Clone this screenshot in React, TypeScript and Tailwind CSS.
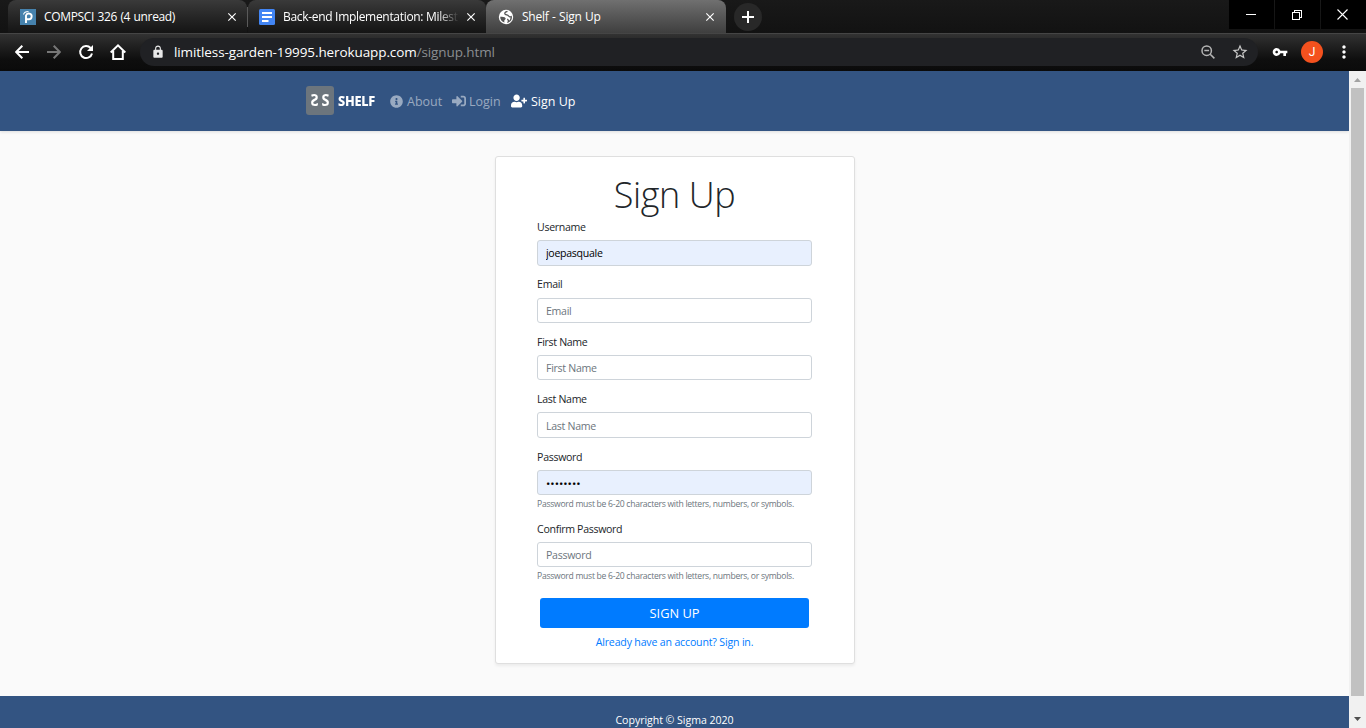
import React from "react";
import { FaInfoCircle, FaSignInAlt, FaUserPlus } from "react-icons/fa";
import { MdClose, MdLock, MdMoreVert, MdStarBorder, MdVpnKey } from "react-icons/md";

function Tab({ icon, title, active, className }: { icon: React.ReactNode; title: React.ReactNode; active?: boolean; className: string }) {
  return (
    <div
      className={`flex h-[33px] items-center rounded-t-lg ${
        active ? "bg-linear-to-b from-[#707070] to-[#3f3f3f] pr-[9px]" : "bg-linear-to-b from-[#3a3a3a] to-[#141414] pr-2"
      } ${className}`}
    >
      {icon}
      {title}
      <MdClose className="ml-auto size-[14px] shrink-0 text-white" />
    </div>
  );
}

function BrowserChrome() {
  return (
    <header className="h-[71px] shrink-0 bg-[#0b0b0b] text-white">
      <div className="flex h-[33px] bg-linear-to-b from-[#191919] to-[#121212] pl-2">
        <Tab
          className="w-[239px] pl-3"
          icon={
            <svg viewBox="0 0 16 16" className="size-4 shrink-0">
              <rect width="16" height="16" fill="#4682ad" />
              <path d="M6 14V6.500a2.900 2.900 0 1 1 2.500 3.800H6" fill="none" stroke="#fff" strokeWidth="1.900" />
              <path d="M3.500 5.500C4 3.300 5.800 2.500 8.500 2.500" fill="none" stroke="#fff" strokeWidth="1.100" />
            </svg>
          }
          title={<span className="ml-2 text-[12px] tracking-[-0.35px] whitespace-nowrap [word-spacing:0.7px]">COMPSCI 326 (4 unread)</span>}
        />
        <div className="mt-[7px] h-5 w-px bg-[#5a5a5a]" />
        <Tab
          className="w-[238px] pl-[11px]"
          icon={
            <svg viewBox="0 0 16 16" className="size-4 shrink-0">
              <rect width="16" height="16" rx="1.5" fill="#4285f4" />
              <path d="M3 4h10M3 8h10M3 12h6.5" stroke="#fff" strokeWidth="2" />
            </svg>
          }
          title={
            <span className="ml-2 w-[176px] mask-r-from-88% text-[12px] tracking-[-0.31px] whitespace-nowrap">
              Back-end Implementation: Milest
            </span>
          }
        />
        <Tab
          active
          className="w-[240px] pl-[12px]"
          icon={
            <svg viewBox="0 0 16 16" className="size-4 shrink-0">
              <circle cx="8" cy="8" r="7.200" fill="#fff" />
              <path d="M9.500 2.400C7 3 6.300 4.200 7.200 5.200c1 .9 2.600.6 3.200 1.600.5.900 1.800 1.200 2.800.8.300 2-1 4.400-3 5.300.6-1.600 0-2.300-1-2.900" fill="none" stroke="#555" strokeWidth="1.300" />
              <path d="M2.200 7.800c2 .2 4.500-.2 5.400 1.400.5 1.200-1.200 1.500-1.400 2.700l.3 1.700C4 13 2 10.800 2.200 7.800z" fill="#555" />
            </svg>
          }
          title={<span className="ml-[8px] text-[12px] tracking-[-0.22px] whitespace-nowrap [word-spacing:0.5px]">Shelf - Sign Up</span>}
        />
        <div className="mt-[3px] ml-2 flex size-7 items-center justify-center rounded-full bg-[#282828]">
          <svg viewBox="0 0 12 12" className="size-3">
            <path d="M6 0v12M0 6h12" stroke="#fff" strokeWidth="2" />
          </svg>
        </div>
        <div className="ml-auto flex h-[29px] gap-px">
          <div className="flex w-[45px] items-center justify-center bg-black pr-[2px]">
            <div className="h-px w-[10px] bg-white" />
          </div>
          <div className="flex w-[45px] items-center justify-center bg-black pr-px">
            <svg viewBox="0 0 10 10" className="size-[10px]" fill="none" stroke="#fff" shapeRendering="crispEdges">
              <path d="M.5 2.5h7v7h-7zM2.5 2.5v-2h7v7h-2" />
            </svg>
          </div>
          <div className="flex w-[45px] items-center justify-center bg-black pr-[2px]">
            <svg viewBox="0 0 11 11" className="size-[11px]" stroke="#fff" strokeWidth="1.1">
              <path d="M.5.5l10 10M10.5.5l-10 10" />
            </svg>
          </div>
        </div>
      </div>
      <div className="h-[38px] border-t border-[#454545] bg-linear-to-b from-[#323232] from-0% via-[#0e0e0e] via-70% to-[#0b0b0b] pt-1">
        <div className="flex h-7 items-center">
          <svg viewBox="0 0 14 14" className="ml-[15px] size-[14px]" fill="none" stroke="#fff" strokeWidth="2">
            <path d="M14 7H1.5M7.3 .8L1.2 7l6.1 6.2" />
          </svg>
          <svg viewBox="0 0 14 14" className="ml-[18px] size-[14px]" fill="none" stroke="#777" strokeWidth="2">
            <path d="M0 7h12.5M6.7 .8L12.8 7l-6.1 6.2" />
          </svg>
          <svg viewBox="0 0 16 16" className="ml-[17px] size-4" fill="none" stroke="#fff" strokeWidth="2">
            <path d="M12.6 4A6 6 0 1 0 14 9.5" />
            <path d="M15 1v6H9z" fill="#fff" stroke="none" />
          </svg>
          <svg viewBox="0 0 16 16" className="ml-4 size-4" fill="none" stroke="#fff" strokeWidth="2">
            <path d="M.7 8.5L8 1.4l7.3 7.1M3.2 7v8h9.6V7" />
          </svg>
          <div className="ml-[14px] flex h-7 w-[1118px] items-center rounded-full bg-[#202124] pr-[9px] pl-[11px]">
            <MdLock className="size-[14px] text-[#e8e8e8]" />
            <span className="ml-[9px] text-[13.5px] tracking-[-0.1px] whitespace-nowrap text-white">
              limitless-garden-19995.herokuapp.com<span className="text-[#8b8e91]">/signup.html</span>
            </span>
            <svg viewBox="0 0 14 14" className="mr-[2px] ml-auto size-[14px]" fill="none" stroke="#b5b5b5" strokeWidth="1.500">
              <circle cx="5.700" cy="5.700" r="4.700" />
              <path d="M9.200 9.200l4.200 4.200M3.300 5.500h4.800" />
            </svg>
            <MdStarBorder className="ml-[14px] size-[18px] text-[#c8c8c8]" />
          </div>
          <MdVpnKey className="ml-[14px] size-4 text-white" />
          <div className="ml-[13px] flex size-[22px] items-center justify-center rounded-full bg-[#f4511e] font-[Roboto,sans-serif] text-[12px]">J</div>
          <MdMoreVert className="ml-[11px] size-5" />
        </div>
      </div>
    </header>
  );
}

function Field({ label, value, placeholder, hint, password }: { label: string; value?: string; placeholder?: string; hint?: string; password?: boolean }) {
  return (
    <div className="mb-[9.9px]">
      <label className="block h-[18px] pl-[0.6px] text-[10.6px] leading-[18px] tracking-[-0.33px] text-[#212529]">{label}</label>
      <input
        type={password ? "password" : "text"}
        defaultValue={value}
        placeholder={placeholder}
        className={`mt-[4.2px] block h-[25.3px] w-full rounded-[3px] border border-[#ced4da] pr-2 pl-[8.5px] text-black placeholder:text-[#6c757d] ${
          value ? "bg-[#e8f0fe]" : "bg-white"
        } ${password && value ? "pt-0.5 text-[11.5px] tracking-normal" : "pt-px text-[10.6px] tracking-[-0.3px]"}`}
      />
      {hint && <p className="h-[14.6px] pt-[3px] pl-[0.6px] text-[8.6px] leading-3 tracking-[-0.29px] whitespace-nowrap text-[#6c757d]">{hint}</p>}
    </div>
  );
}

const passwordHint = "Password must be 6-20 characters with letters, numbers, or symbols.";

function Scrollbar() {
  return (
    <div className="flex w-[17px] shrink-0 flex-col items-center bg-[#f1f1f1]">
      <svg viewBox="0 0 17 17" className="h-[17px] w-[17px]">
        <path d="M5 11h7L8.5 7z" fill="#a3a3a3" />
      </svg>
      <div className="h-[608px] w-[13px] bg-[#c1c1c1]" />
      <svg viewBox="0 0 17 17" className="mt-auto h-[17px] w-[17px]">
        <path d="M5 6h7l-3.500 4z" fill="#505050" />
      </svg>
    </div>
  );
}

export default function App() {
  return (
    <div className="flex h-[728px] w-[1366px] flex-col overflow-hidden font-['Open_Sans','Noto_Sans',sans-serif]">
      <BrowserChrome />
      <div className="flex min-h-0 flex-1">
        <div className="flex flex-1 flex-col bg-[#fafafa]">
          <nav className="flex h-[60px] shrink-0 items-center bg-[#335482] pl-[306px] text-[12.5px] text-white/50 shadow-[0_1px_3px_rgba(0,0,0,0.12)]">
            <div className="mb-px flex h-[29px] w-7 items-center justify-center gap-[2px] rounded-[3px] bg-[#6c757d] pb-px font-['Noto_Sans',sans-serif] text-[16px] font-bold text-white">
              <span className="-scale-x-90">S</span>
              <span className="scale-x-90">S</span>
            </div>
            <div className="ml-1 w-[38px] pb-px">
              <span className="inline-block origin-left scale-x-[0.88] font-['Noto_Sans',sans-serif] text-[14.5px] font-extrabold tracking-[-0.3px] text-white">SHELF</span>
            </div>
            <a className="ml-[14px] flex w-[62px] items-center gap-1 whitespace-nowrap">
              <FaInfoCircle className="size-[13px]" />
              <span className="pt-[2px]">About</span>
            </a>
            <a className="flex w-[59px] items-center gap-[3px] whitespace-nowrap">
              <FaSignInAlt className="size-[14px]" />
              <span className="pt-[2px]">Login</span>
            </a>
            <a className="flex items-center gap-1 whitespace-nowrap text-white">
              <FaUserPlus className="h-[14px] w-4" />
              <span className="pt-[2px]">Sign Up</span>
            </a>
          </nav>
          <main className="flex h-[565px] shrink-0 justify-center pt-[25px]">
            <form className="h-[508px] w-[360px] rounded-[3px] border border-[#dfdfdf] bg-white px-[41px] shadow-[0_2px_3px_rgba(0,0,0,0.06)]">
              <h1 className="mt-[13px] mb-0 h-[48.07px] text-center text-[36px] leading-[50px] font-light tracking-[-0.4px] text-[#212529]">Sign Up</h1>
              <div className="w-[275px]">
                <Field label="Username" value="joepasquale" />
                <Field label="Email" placeholder="Email" />
                <Field label="First Name" placeholder="First Name" />
                <Field label="Last Name" placeholder="Last Name" />
                <Field label="Password" value="password" password hint={passwordHint} />
                <Field label="Confirm Password" placeholder="Password" hint={passwordHint} />
              </div>
              <button type="button" className="mx-auto mt-[16.5px] block h-[30px] w-[269px] rounded-[3px] bg-[#007bff] pt-px text-[12.8px] text-white">
                SIGN UP
              </button>
              <a className="mt-[5px] block text-center text-[10.6px] leading-[18px] tracking-[-0.18px] text-[#007bff]">Already have an account? Sign in.</a>
            </form>
          </main>
          <footer className="flex-1 bg-[#335482] pt-4 text-center text-[10.6px] leading-4 tracking-[-0.05px] text-white">Copyright © Sigma 2020</footer>
        </div>
        <Scrollbar />
      </div>
    </div>
  );
}
